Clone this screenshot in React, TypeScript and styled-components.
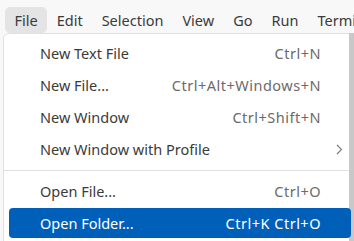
import React from "react";
import styled, { createGlobalStyle } from "styled-components";

const Global = createGlobalStyle`
  html, body {
    margin: 0;
    padding: 0;
    background: #f8f8f8;
    overflow: hidden;
    height: 100%;
  }
  body {
    font-family: "Noto Sans", "Open Sans", sans-serif;
    color: #3b3b3b;
  }
`;

const Page = styled.div`
  position: relative;
  width: 354px;
  height: 241px;
  overflow: hidden;
`;

const MenuBar = styled.div`
  display: flex;
  padding: 7px 0 0 5px;
  height: 26px;
`;

const BarItem = styled.div<{ active?: boolean }>`
  display: flex;
  align-items: center;
  padding: 0 9.5px;
  height: 26px;
  font-size: 14.5px;
  border-radius: 5px;
  white-space: nowrap;
  background: ${(p) => (p.active ? "#e4e4e4" : "transparent")};
`;

const Menu = styled.div`
  position: relative;
  display: flex;
  flex-direction: column;
  gap: 2px;
  margin-left: 3px;
  width: 352px;
  height: 220px;
  box-sizing: border-box;
  background: #fff;
  border: 1px solid #e0e0e0;
  border-radius: 6px;
  padding: 4px 0;
`;

const Track = styled.div`
  position: absolute;
  top: -1px;
  bottom: 0;
  left: 345px;
  width: 8px;
  background: #c8c8c8;
`;

const Item = styled.div<{ selected?: boolean }>`
  position: relative;
  z-index: 1;
  display: grid;
  grid-template-columns: 1fr auto 30px;
  align-items: center;
  flex: none;
  height: 30px;
  margin-left: 5px;
  width: 342px;
  padding-left: 31px;
  box-sizing: border-box;
  border-radius: 4px;
  font-size: 14.5px;
  white-space: nowrap;
  background: ${(p) => (p.selected ? "#005fb8" : "transparent")};
  color: ${(p) => (p.selected ? "#ffffff" : "#3b3b3b")};
`;

const Shortcut = styled.span<{ selected?: boolean }>`
  font-size: 14.5px;
  letter-spacing: 0.5px;
  color: ${(p) => (p.selected ? "#ffffff" : "#6b6b6b")};
`;

const Arrow = styled.span`
  display: flex;
  align-items: center;
  padding-left: 15px;
`;

const Separator = styled.div`
  flex: none;
  height: 1px;
  background: #e0e0e0;
  margin: 4px 0 3px 0;
`;

type Entry = { label: string; keys?: string; sub?: boolean; selected?: boolean } | "sep";

const entries: Entry[] = [
  { label: "New Text File", keys: "Ctrl+N" },
  { label: "New File...", keys: "Ctrl+Alt+Windows+N" },
  { label: "New Window", keys: "Ctrl+Shift+N" },
  { label: "New Window with Profile", sub: true },
  "sep",
  { label: "Open File...", keys: "Ctrl+O" },
  { label: "Open Folder...", keys: "Ctrl+K Ctrl+O", selected: true },
];

const bar = ["File", "Edit", "Selection", "View", "Go", "Run", "Terminal"];

export default function App() {
  return (
    <Page>
      <Global />
      <MenuBar>
        {bar.map((b, i) => (
          <BarItem key={b} active={i === 0}>
            {b}
          </BarItem>
        ))}
      </MenuBar>
      <Menu>
        <Track />
        {entries.map((e, i) =>
          e === "sep" ? (
            <Separator key={i} />
          ) : (
            <Item key={i} selected={e.selected}>
              <span>{e.label}</span>
              <Shortcut selected={e.selected}>{e.keys}</Shortcut>
              <Arrow>
                {e.sub && (
                  <svg width="7" height="11" viewBox="0 0 7 11">
                    <path d="M1 1l4.5 4.5L1 10" fill="none" stroke="#7a7a7a" strokeWidth="1.1" />
                  </svg>
                )}
              </Arrow>
            </Item>
          )
        )}
      </Menu>
    </Page>
  );
}
